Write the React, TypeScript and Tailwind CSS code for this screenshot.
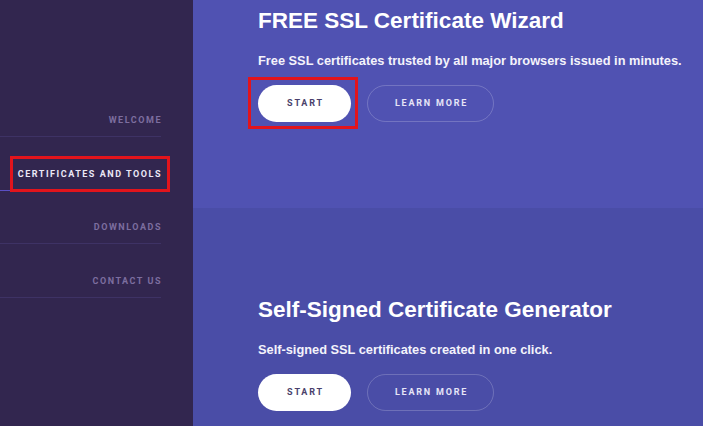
import React from "react";

const navItems = [
  { label: "WELCOME", active: false },
  { label: "CERTIFICATES AND TOOLS", active: true },
  { label: "DOWNLOADS", active: false },
  { label: "CONTACT US", active: false },
];

function Section({
  title,
  subtitle,
  bg,
  pt,
  h,
  highlight,
}: {
  title: string;
  subtitle: string;
  bg: string;
  pt: string;
  h: string;
  highlight?: boolean;
}) {
  return (
    <section className={`${bg} ${pt} ${h} pl-[65px]`}>
      <h1 className="font-['Liberation_Sans',Arial,sans-serif] text-[22.5px] leading-[26px] font-bold text-white whitespace-nowrap">
        {title}
      </h1>
      <p className="mt-[19px] font-['Liberation_Sans',Arial,sans-serif] text-[12.8px] leading-[16px] font-bold text-[#f4f3fb] whitespace-nowrap">
        {subtitle}
      </p>
      <div className="mt-[16px] flex gap-[16px]">
        <div className="relative">
          <button className="flex h-[37px] w-[93px] items-center justify-center rounded-full bg-white pl-[2px] font-['Roboto',sans-serif] text-[9px] font-bold tracking-[0.2em] text-[#4a3f6b]">
            START
          </button>
          {highlight && (
            <div className="absolute left-[-10px] top-[-8px] h-[52px] w-[110px] border-[3px] border-[#e2141c]" />
          )}
        </div>
        <button className="flex h-[37px] w-[127px] items-center justify-center rounded-full border border-white/20 pl-[2px] font-['Roboto',sans-serif] text-[9px] font-bold tracking-[0.2em] text-[#e6e5f7]">
          LEARN MORE
        </button>
      </div>
    </section>
  );
}

export default function App() {
  return (
    <div className="flex h-[426px] w-[703px] overflow-hidden">
      <aside className="h-full w-[193px] shrink-0 bg-[#32264f] pt-[83.5px]">
        <ul className="w-[161px]">
          {navItems.map((item) => (
            <li
              key={item.label}
              className={`relative flex h-[53.5px] items-end justify-end border-b pb-[11px] ${
                item.active ? "border-[#5b4fc4]" : "border-[#3e3265]"
              }`}
            >
              <span
                className={`font-['Roboto',sans-serif] text-[9px] leading-[10px] font-bold tracking-[0.17em] mr-[-1px] ${
                  item.active ? "text-[#ebe8f6]" : "text-[#7d6e9f]"
                }`}
              >
                {item.label}
              </span>
              {item.active && (
                <div className="absolute left-[10px] top-[19px] h-[36px] w-[160px] border-[3px] border-[#e2141c]" />
              )}
            </li>
          ))}
        </ul>
      </aside>
      <main className="flex-1">
        <Section
          title="FREE SSL Certificate Wizard"
          subtitle="Free SSL certificates trusted by all major browsers issued in minutes."
          bg="bg-[#5052b2]"
          pt="pt-[8px]"
          h="h-[208px]"
          highlight
        />
        <Section
          title="Self-Signed Certificate Generator"
          subtitle="Self-signed SSL certificates created in one click."
          bg="bg-[#4a4da7]"
          pt="pt-[89px]"
          h="h-[218px]"
        />
      </main>
    </div>
  );
}
